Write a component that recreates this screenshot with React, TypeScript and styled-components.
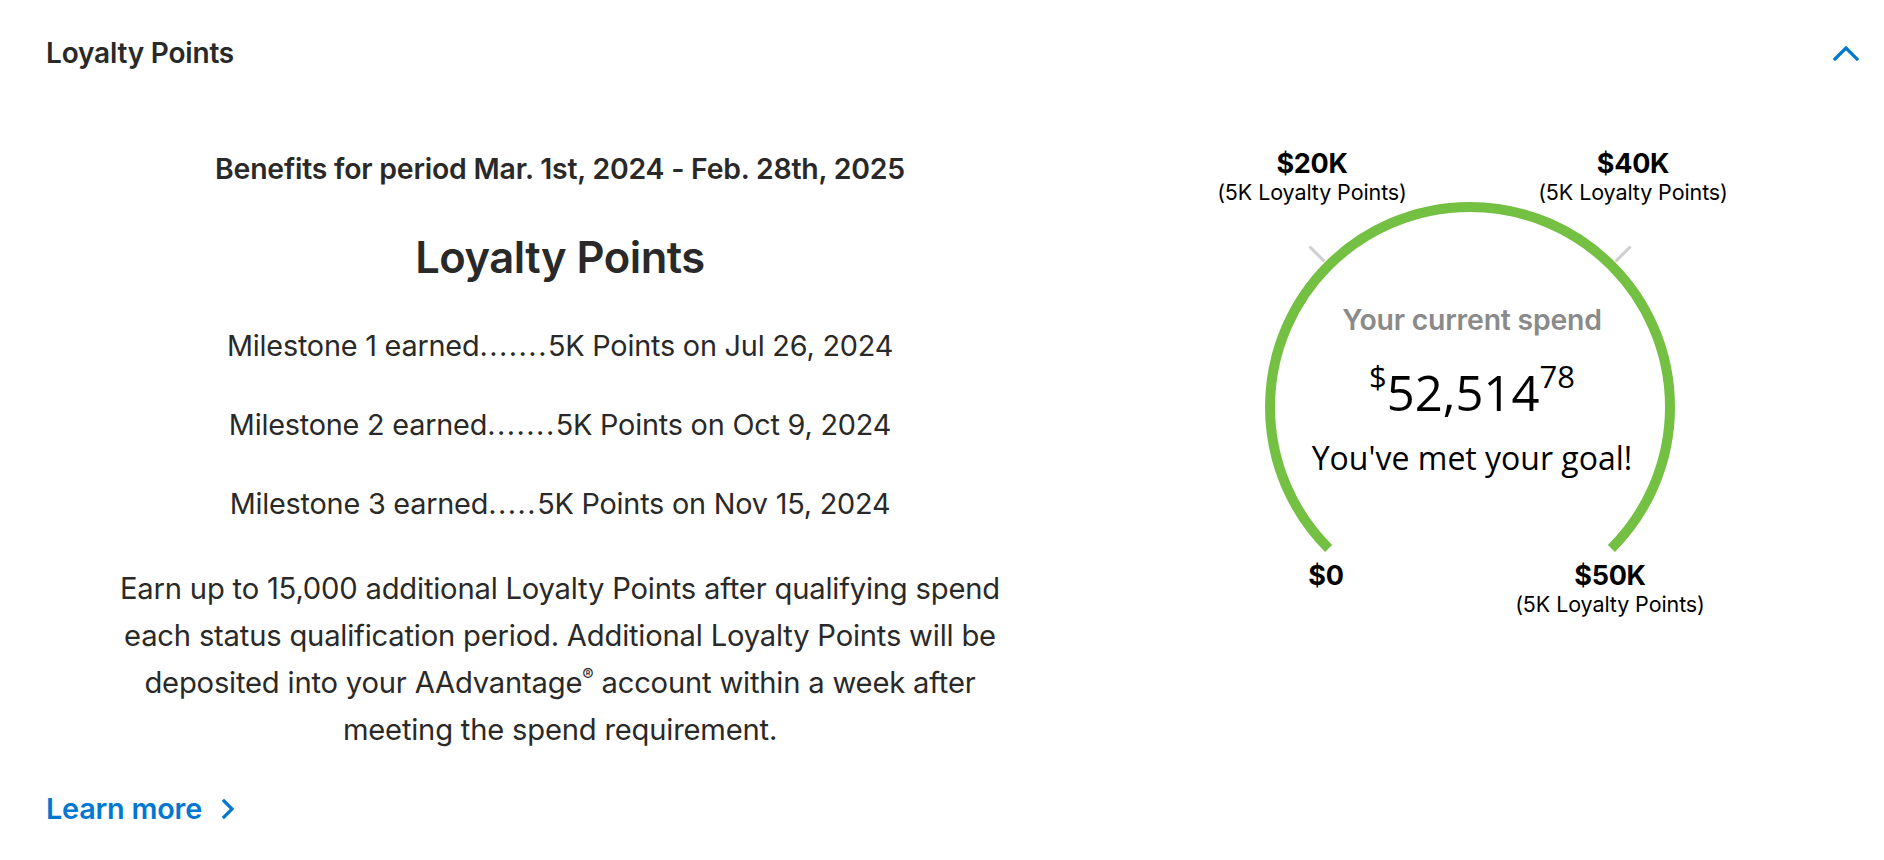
import React from "react";
import styled, { createGlobalStyle } from "styled-components";

const GlobalStyle = createGlobalStyle`
  html, body { margin: 0; padding: 0; background: #ffffff; }
  body { font-family: Inter, "Open Sans", "Liberation Sans", sans-serif; color: #292929; }
  * { box-sizing: border-box; }
`;

const Page = styled.section`
  width: 1884px;
  height: 860px;
  background: #ffffff;
  overflow: hidden;
`;

const Header = styled.header`
  height: 106px;
  padding: 0 25px 0 46px;
  display: flex;
  align-items: center;
  justify-content: space-between;
`;

const Title = styled.h2`
  margin: 0;
  font-size: 28px;
  font-weight: 600;
  letter-spacing: -0.2px;
  color: #292929;
`;

const ToggleButton = styled.button`
  border: 0;
  background: none;
  padding: 0;
  display: flex;
  align-items: center;
  cursor: pointer;
  color: #0078d2;
`;

const Body = styled.div`
  display: grid;
  grid-template-columns: 1028px 1fr;
  padding: 0 18px 0 46px;
`;

const Benefits = styled.div`
  display: flex;
  flex-direction: column;
  align-items: center;
  text-align: center;
  padding-top: 47px;
`;

const Period = styled.p`
  margin: 0;
  font-size: 28.4px;
  line-height: 32px;
  font-weight: 600;
  letter-spacing: -0.2px;
  color: #292929;
`;

const Heading = styled.h3`
  margin: 47px 0 0;
  font-size: 43.5px;
  line-height: 50px;
  font-weight: 600;
  letter-spacing: -0.5px;
  color: #292929;
`;

const MilestoneList = styled.ul`
  list-style: none;
  margin: 48px 0 0;
  padding: 0;
  display: flex;
  flex-direction: column;
  gap: 47px;
`;

const Milestone = styled.li`
  font-size: 28.8px;
  line-height: 32px;
  font-weight: 400;
  letter-spacing: -0.2px;
  color: #292929;
`;

const Dots = styled.span`
  letter-spacing: 1.5px;
`;

const Note = styled.p`
  margin: 45px 0 0;
  max-width: 905px;
  font-size: 29.2px;
  line-height: 47px;
  font-weight: 400;
  letter-spacing: -0.2px;
  color: #292929;

  sup {
    font-size: 17px;
    line-height: 0;
    vertical-align: 12px;
  }
`;

const LearnMore = styled.a`
  align-self: flex-start;
  margin-top: 40px;
  display: inline-flex;
  align-items: center;
  gap: 19px;
  font-size: 28.8px;
  line-height: 32px;
  font-weight: 600;
  letter-spacing: -0.2px;
  color: #0078d2;
  text-decoration: none;
  cursor: pointer;
`;

const GaugeColumn = styled.div`
  display: flex;
  justify-content: center;
  padding-top: 34px;
`;

const Gauge = styled.div`
  position: relative;
  width: 560px;
  height: 490px;
`;

const GaugeSvg = styled.svg`
  position: absolute;
  inset: 0;
`;

const Mark = styled.div<{ $x: number; $y: number }>`
  position: absolute;
  left: ${(p) => p.$x}px;
  top: ${(p) => p.$y}px;
  transform: translateX(-50%);
  display: flex;
  flex-direction: column;
  align-items: center;
  white-space: nowrap;
  color: #000000;
`;

const MarkAmount = styled.span`
  font-size: 27px;
  line-height: 28px;
  font-weight: 700;
  letter-spacing: -0.3px;
`;

const MarkSub = styled.span`
  font-size: 21.5px;
  line-height: 29px;
  font-weight: 400;
  letter-spacing: -0.1px;
`;

const Readout = styled.div`
  position: absolute;
  left: 4px;
  right: 0;
  top: 164px;
  display: flex;
  flex-direction: column;
  align-items: center;
`;

const ReadoutLabel = styled.span`
  font-size: 28.4px;
  line-height: 32px;
  font-weight: 600;
  letter-spacing: -0.2px;
  color: #8a8a8a;
`;

const ReadoutAmount = styled.span`
  margin-top: 29px;
  font-family: "Open Sans", "Noto Sans", sans-serif;
  font-size: 49px;
  line-height: 54px;
  font-weight: 400;
  color: #000000;
  display: flex;
  align-items: flex-start;
`;

const Sup = styled.span`
  font-size: 31px;
  line-height: 30px;
  margin-top: -4px;
`;

const ReadoutStatus = styled.span`
  margin-top: 19px;
  font-family: "Open Sans", "Noto Sans", sans-serif;
  font-size: 32px;
  line-height: 40px;
  font-weight: 400;
  color: #000000;
`;

const CX = 280;
const CY = 267;
const R = 200;

const polar = (deg: number, r: number) => {
  const a = (deg * Math.PI) / 180;
  return { x: CX + r * Math.sin(a), y: CY - r * Math.cos(a) };
};

const start = polar(-135, R);
const end = polar(135, R);
const ticks = [-45, 45].map((d) => ({ a: polar(d, 206), b: polar(d, 227) }));

export default function App() {
  return (
    <>
      <GlobalStyle />
      <Page>
        <Header>
          <Title>Loyalty Points</Title>
          <ToggleButton aria-label="Collapse">
            <svg width="26" height="16" viewBox="0 0 26 16" fill="none">
              <polyline points="2,14 13,3 24,14" stroke="#0078d2" strokeWidth="3.2" strokeLinecap="square" />
            </svg>
          </ToggleButton>
        </Header>
        <Body>
          <Benefits>
            <Period>Benefits for period Mar. 1st, 2024 - Feb. 28th, 2025</Period>
            <Heading>Loyalty Points</Heading>
            <MilestoneList>
              <Milestone>
                Milestone 1 earned<Dots>.......</Dots>5K Points on Jul 26, 2024
              </Milestone>
              <Milestone>
                Milestone 2 earned<Dots>.......</Dots>5K Points on Oct 9, 2024
              </Milestone>
              <Milestone>
                Milestone 3 earned<Dots>.....</Dots>5K Points on Nov 15, 2024
              </Milestone>
            </MilestoneList>
            <Note>
              Earn up to 15,000 additional Loyalty Points after qualifying spend each status qualification
              period. Additional Loyalty Points will be deposited into your AAdvantage<sup>®</sup> account
              within a week after meeting the spend requirement.
            </Note>
            <LearnMore>
              Learn more
              <svg width="14" height="22" viewBox="0 0 14 22" fill="none">
                <polyline points="3,3 11,11 3,19" stroke="#0078d2" strokeWidth="3.2" strokeLinecap="square" />
              </svg>
            </LearnMore>
          </Benefits>
          <GaugeColumn>
            <Gauge>
              <GaugeSvg width="560" height="490" viewBox="0 0 560 490">
                <path
                  d={`M ${start.x} ${start.y} A ${R} ${R} 0 1 1 ${end.x} ${end.y}`}
                  fill="none"
                  stroke="#74c043"
                  strokeWidth="10"
                />
                {ticks.map((t, i) => (
                  <line key={i} x1={t.a.x} y1={t.a.y} x2={t.b.x} y2={t.b.y} stroke="#cfcfcf" strokeWidth="3" />
                ))}
              </GaugeSvg>
              <Mark $x={122} $y={10}>
                <MarkAmount>$20K</MarkAmount>
                <MarkSub>(5K Loyalty Points)</MarkSub>
              </Mark>
              <Mark $x={443} $y={10}>
                <MarkAmount>$40K</MarkAmount>
                <MarkSub>(5K Loyalty Points)</MarkSub>
              </Mark>
              <Mark $x={136} $y={422}>
                <MarkAmount>$0</MarkAmount>
              </Mark>
              <Mark $x={420} $y={422}>
                <MarkAmount>$50K</MarkAmount>
                <MarkSub>(5K Loyalty Points)</MarkSub>
              </Mark>
              <Readout>
                <ReadoutLabel>Your current spend</ReadoutLabel>
                <ReadoutAmount>
                  <Sup>$</Sup>52,514<Sup>78</Sup>
                </ReadoutAmount>
                <ReadoutStatus>You've met your goal!</ReadoutStatus>
              </Readout>
            </Gauge>
          </GaugeColumn>
        </Body>
      </Page>
    </>
  );
}
